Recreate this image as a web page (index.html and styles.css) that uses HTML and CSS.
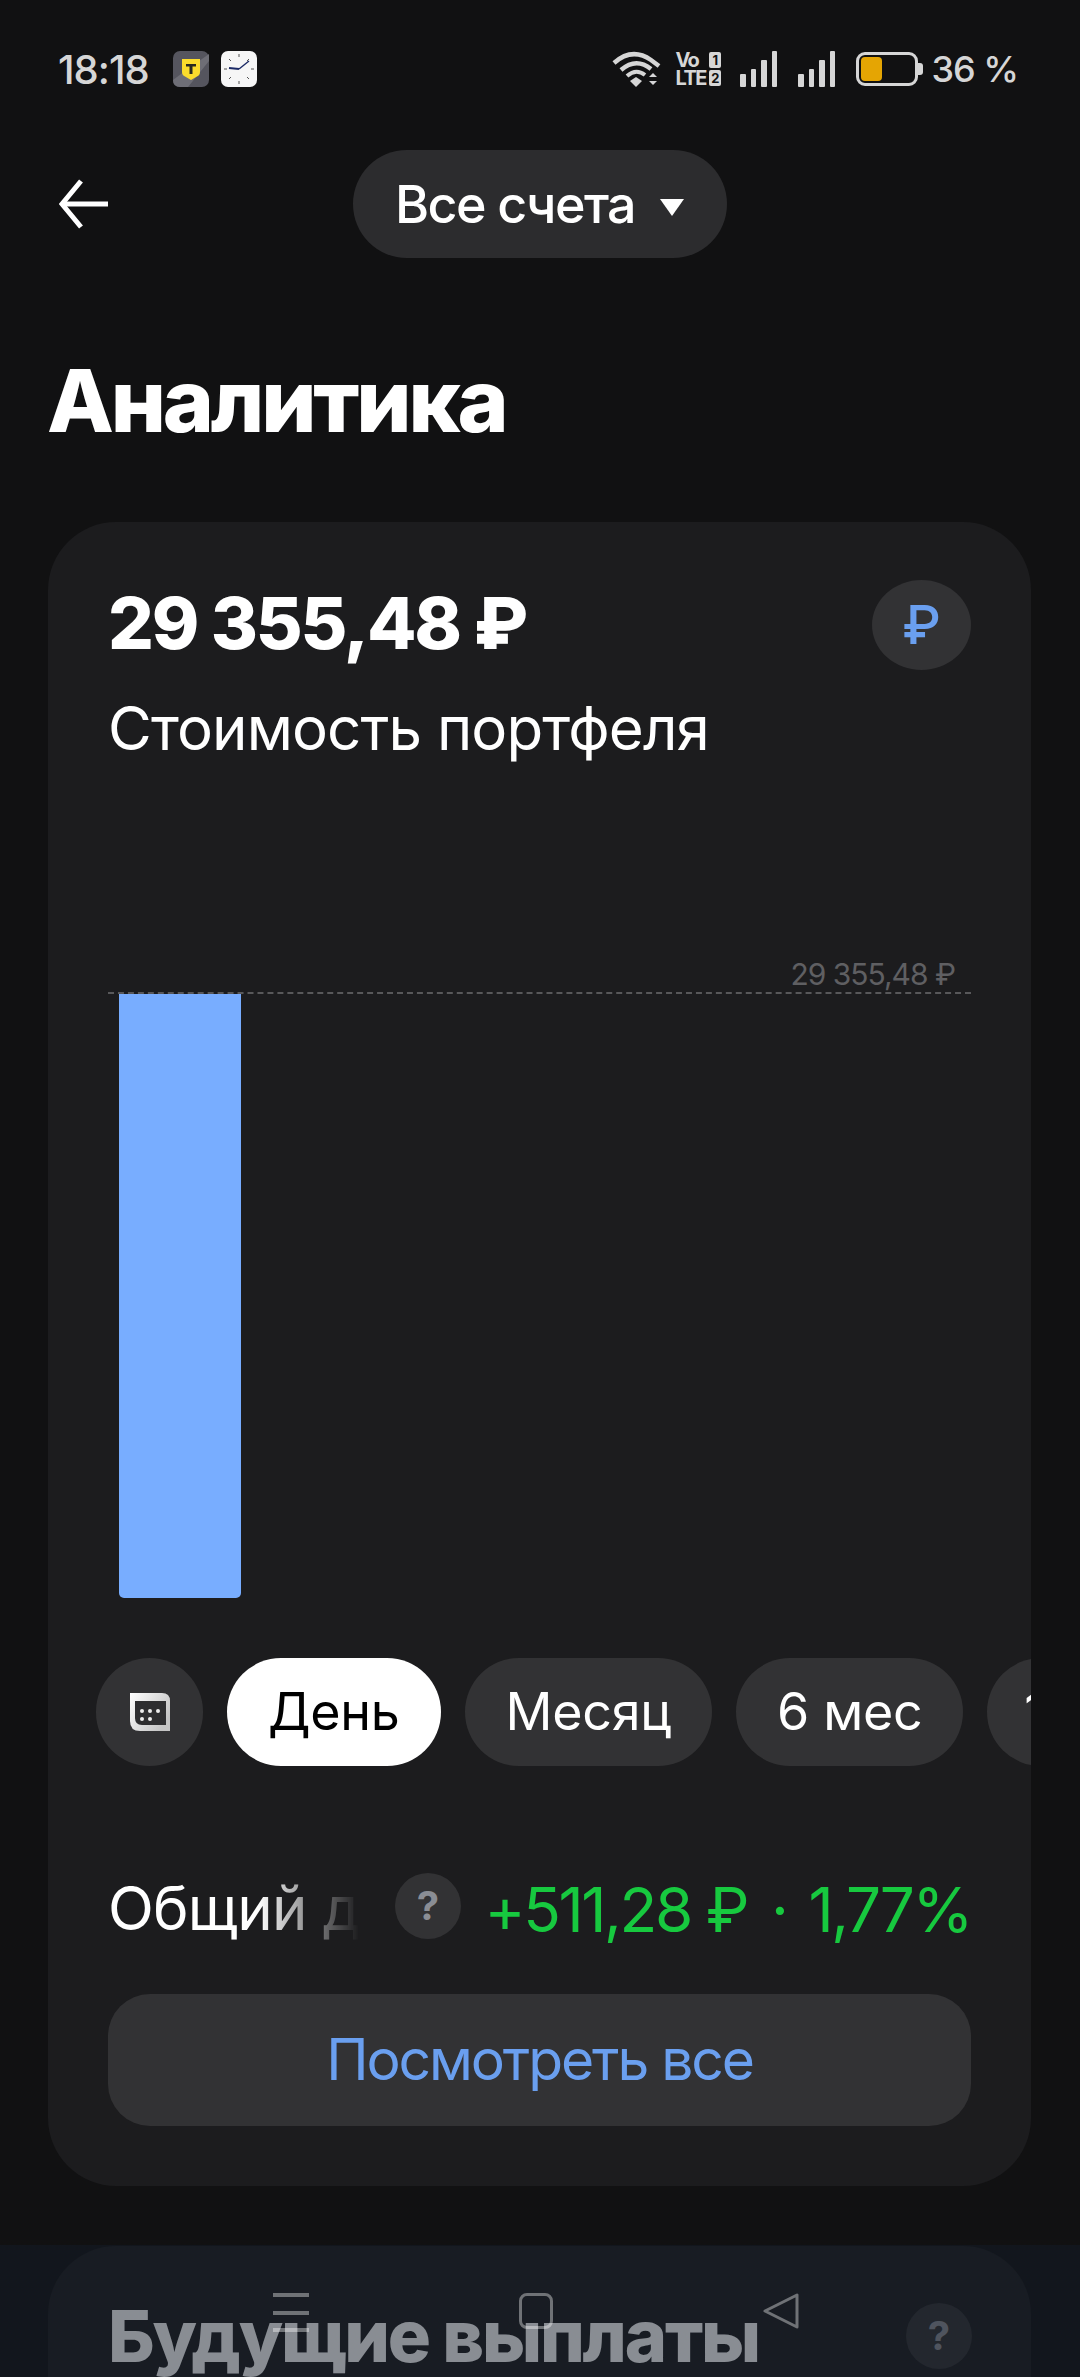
FILE: index.html
```html
<!DOCTYPE html>
<html lang="ru">
<head>
  <meta charset="UTF-8" />
  <meta name="viewport" content="width=device-width, initial-scale=1" />
  <title>Аналитика</title>
  <link rel="stylesheet" href="styles.css">
</head>
<body>

<div class="page">

  <div class="statusbar">
    <div class="status-left">
      <span class="time">18:18</span>
      <svg class="app-icon" viewBox="0 0 36 36">
        <rect width="36" height="36" rx="7" fill="#55555e"/>
        <path d="M0 29 L12 20 L36 3 V10 L15 36 H7 Q0 36 0 29Z" fill="#6e6e76"/>
        <path d="M9 8 H27 V21 Q27 24 24 25.5 L18 29 L12 25.5 Q9 24 9 21Z" fill="#fbdc2c"/>
        <path d="M13 13 H23 V15.5 H19.5 V23 H16.5 V15.5 H13Z" fill="#2a2a20"/>
      </svg>
      <svg class="app-icon" viewBox="0 0 36 36">
        <rect width="36" height="36" rx="7" fill="#f6f6f6"/>
        <g stroke="#555" stroke-width="1">
          <path d="M18 3V6M18 30V33M3 18H6M30 18H33M8 8L10 10M26 26L28 28M28 8L26 10M8 28L10 26"/>
        </g>
        <path d="M18 18L28 10" stroke="#1c2a66" stroke-width="1.5"/>
        <path d="M18 18L8 17" stroke="#1c2a66" stroke-width="2"/>
      </svg>
    </div>
    <div class="status-right">
      <svg class="wifi" width="50" height="36" viewBox="0 0 50 36" fill="none" stroke="#d6d6d6">
        <path d="M2 12 Q20 -4 39 9 L47 15" stroke-width="4.5"/>
        <path d="M9 19 Q24 6 39 18" stroke-width="4.5"/>
        <path d="M15 25 Q24 17 33 24" stroke-width="4"/>
        <path d="M18 30 L24 26 L30 30 L24 36Z" fill="#d6d6d6" stroke="none"/>
        <path d="M37 26 L41 22 L45 26ZM37 30 L45 30 L41 34Z" fill="#d6d6d6" stroke="none"/>
      </svg>
      <div class="volte">
        <div class="volte-row"><span>Vo</span><span class="sim">1</span></div>
        <div class="volte-row"><span>LTE</span><span class="sim">2</span></div>
      </div>
      <div class="signal">
        <i class="s1"></i><i class="s2"></i><i class="s3"></i><i class="s4"></i>
      </div>
      <div class="signal">
        <i class="s1"></i><i class="s2"></i><i class="s3"></i><i class="s4"></i>
      </div>
      <div class="battery"><div class="battery-fill"></div></div>
      <span class="percent">36 %</span>
    </div>
  </div>

  <div class="topnav">
    <svg class="back" width="50" height="50" viewBox="0 0 50 50" fill="none" stroke="#fff" stroke-width="5">
      <path d="M22 2 L3 25 L22 48"/>
      <path d="M3 25 H49"/>
    </svg>
    <div class="account-pill">
      <span>Все счета</span>
      <span class="caret"></span>
    </div>
  </div>

  <h1 class="page-title">Аналитика</h1>

  <section class="card">
    <div class="card-head">
      <div>
        <div class="amount">29 355,48 ₽</div>
        <div class="amount-label">Стоимость портфеля</div>
      </div>
      <div class="currency">₽</div>
    </div>

    <div class="chart">
      <div class="chart-max">29 355,48 ₽</div>
      <div class="chart-area">
        <div class="bar"></div>
      </div>
    </div>

    <div class="chips">
      <div class="chip chip-icon">
        <svg width="40" height="38" viewBox="0 0 40 38">
          <defs>
            <linearGradient id="calTop" x1="0" y1="0" x2="1" y2="0.6">
              <stop offset="0" stop-color="#ffffff"/>
              <stop offset="1" stop-color="#c4c4c4"/>
            </linearGradient>
          </defs>
          <path d="M0 0 H32 Q40 0 40 8 V38 H10 Q0 38 0 28Z" fill="url(#calTop)"/>
          <path d="M5 8 H36 V32 H12 Q5 32 5 25Z" fill="#2e2e30"/>
          <g fill="#ededed">
            <circle cx="12" cy="18" r="2"/><circle cx="20" cy="18" r="2"/><circle cx="28" cy="18" r="2"/>
            <circle cx="12" cy="26" r="2"/><circle cx="20" cy="26" r="2"/>
          </g>
        </svg>
      </div>
      <div class="chip active">День</div>
      <div class="chip">Месяц</div>
      <div class="chip">6 мес</div>
      <div class="chip chip-last">1 год</div>
    </div>

    <div class="total-row">
      <span class="total-label">Общий доход</span>
      <span class="hint">?</span>
      <span class="total-value">+511,28 ₽<span class="dot">·</span>1,77%</span>
    </div>

    <div class="show-all">Посмотреть все</div>
  </section>

  <section class="card card-next">
    <h2>Будущие выплаты</h2>
    <span class="hint hint-next">?</span>
  </section>

  <!-- системная панель поверх контента -->
  <div class="navbar">
    <div class="nav-menu"><i></i><i></i><i></i></div>
    <div class="nav-home"></div>
    <svg width="36" height="36" viewBox="0 0 36 36" fill="none" stroke="#ffffff" stroke-opacity=".38" stroke-width="3" stroke-linejoin="round">
      <path d="M34 2 V34 L2 18Z"/>
    </svg>
  </div>

</div>

</body>
</html>
```

FILE: styles.css
```css
:root {
  --bg: #111112;
  --surface: #1c1c1e;
  --surface2: #323234;
  --blue: #6a9fef;
  --bar: #78adff;
  --green: #17c93f;
  --nav-icon: rgba(255,255,255,.38);
}

* { box-sizing: border-box; margin: 0; padding: 0; }

body {
  font-family: Inter, 'Noto Sans', sans-serif;
  background: var(--bg);
  color: #fff;
}

.page {
  position: relative;
  height: 2377px;
  overflow: hidden;
}

/* Status bar */
.statusbar {
  display: flex;
  align-items: center;
  justify-content: space-between;
  height: 36px;
  margin-top: 51px;
  padding: 0 62px 0 58px;
  color: #d6d6d6;
}

.status-left {
  display: flex;
  align-items: center;
}

.time {
  width: 115px;
  font-size: 40px;
  font-weight: 500;
  letter-spacing: -1px;
}

.app-icon {
  width: 36px;
  height: 36px;
  margin-right: 12px;
}

.status-right {
  display: flex;
  align-items: center;
}

.wifi { margin-right: 13px; }

.volte {
  width: 46px;
  margin-right: 19px;
  font-size: 20px;
  font-weight: 700;
  line-height: 18px;
}

.volte-row {
  display: flex;
  justify-content: space-between;
  align-items: center;
}

.volte-row span:first-child { letter-spacing: -1.5px; }

.sim {
  background: #d6d6d6;
  color: #111;
  border-radius: 2px;
  font-size: 13px;
  line-height: 16px;
  width: 12px;
  text-align: center;
}

.signal {
  display: flex;
  align-items: flex-end;
  gap: 5px;
  height: 36px;
  margin-right: 21px;
}

.signal i {
  display: block;
  width: 5.5px;
  background: #d6d6d6;
  border-radius: 1px;
}

.s1 { height: 13px; }
.s2 { height: 18px; }
.s3 { height: 27px; }
.s4 { height: 36px; }

.battery {
  position: relative;
  width: 62px;
  height: 34px;
  border: 3px solid #d6d6d6;
  border-radius: 9px;
  padding: 2px;
  margin-right: 13px;
}

.battery::after {
  content: "";
  position: absolute;
  right: -8px;
  top: 8px;
  width: 5px;
  height: 12px;
  background: #d6d6d6;
  border-radius: 0 3px 3px 0;
}

.battery-fill {
  width: 21px;
  height: 100%;
  background: #e5a503;
  border-radius: 4px;
}

.percent {
  font-size: 36px;
  font-weight: 500;
  letter-spacing: -1px;
}

/* Top nav */
.topnav {
  position: relative;
  display: flex;
  justify-content: center;
  align-items: center;
  margin-top: 63px;
  height: 108px;
}

.back {
  position: absolute;
  left: 59px;
  top: 29px;
}

.account-pill {
  display: flex;
  align-items: center;
  gap: 25px;
  height: 108px;
  width: 374px;
  padding-left: 42px;
  background: #2c2c2e;
  border-radius: 54px;
  font-size: 52px;
  font-weight: 500;
  letter-spacing: -1.6px;
}

.caret {
  width: 0;
  height: 0;
  margin-top: 6px;
  border-left: 12px solid transparent;
  border-right: 12px solid transparent;
  border-top: 17px solid #fff;
}

.page-title {
  font-size: 87px;
  font-weight: 800;
  letter-spacing: -3.2px;
  line-height: 100px;
  margin: 93px 0 0 47px;
}

/* Card */
.card {
  margin: 71px 49px 0 48px;
  height: 1664px;
  padding: 62px 60px 60px;
  background: var(--surface);
  border-radius: 68px;
  overflow: hidden;
}

.card-head {
  display: flex;
  justify-content: space-between;
  align-items: flex-start;
}

.amount {
  font-size: 72px;
  font-weight: 800;
  line-height: 78px;
  letter-spacing: -2.2px;
}

.amount-label {
  font-size: 60px;
  line-height: 70px;
  margin-top: 31px;
  letter-spacing: -.9px;
}

.currency {
  width: 99px;
  height: 90px;
  margin-top: -4px;
  border-radius: 50%;
  background: var(--surface2);
  color: var(--blue);
  font-size: 54px;
  font-weight: 500;
  line-height: 90px;
  text-align: center;
}

.chart {
  margin-top: 193px;
}

.chart-max {
  font-size: 30px;
  line-height: 36px;
  color: #5f5f62;
  text-align: right;
  padding-right: 16px;
  letter-spacing: -1px;
}

.chart-area {
  height: 606px;
  border-top: 2px dashed #58585a;
  padding-left: 11px;
}

.bar {
  width: 122px;
  height: 604px;
  background: var(--bar);
  border-radius: 0 0 5px 5px;
}

.chips {
  display: flex;
  gap: 24px;
  margin: 60px -60px 0 -12px;
  overflow: hidden;
}

.chip {
  flex: none;
  height: 108px;
  padding: 0 41px;
  background: var(--surface2);
  border-radius: 54px;
  font-size: 52px;
  line-height: 108px;
  letter-spacing: -.3px;
}

.chip-icon {
  display: flex;
  align-items: center;
  justify-content: center;
  width: 107px;
  padding: 0;
}

.chip.active {
  padding: 0 41px;
  background: #fff;
  color: #000;
}

.chip-last { padding-left: 37px; }

.total-row {
  position: relative;
  display: flex;
  align-items: center;
  margin-top: 107px;
  height: 66px;
}

.total-label {
  width: 251px;
  padding-top: 3px;
  font-size: 60px;
  white-space: nowrap;
  overflow: hidden;
  letter-spacing: -.8px;
  -webkit-mask-image: linear-gradient(to right, #000 60%, transparent 100%);
  mask-image: linear-gradient(to right, #000 60%, transparent 100%);
}

.hint {
  flex: none;
  width: 66px;
  height: 66px;
  margin-left: 36px;
  border-radius: 50%;
  background: var(--surface2);
  color: #8a8d94;
  font-size: 40px;
  font-weight: 700;
  line-height: 66px;
  text-align: center;
}

.total-value {
  margin-left: auto;
  padding-top: 6px;
  font-size: 62px;
  color: var(--green);
  white-space: nowrap;
  letter-spacing: -2.4px;
}

.dot {
  margin: 0 22px 0 24px;
}

.show-all {
  height: 132px;
  margin-top: 55px;
  background: var(--surface2);
  border-radius: 42px;
  color: var(--blue);
  font-size: 57px;
  line-height: 132px;
  text-align: center;
  letter-spacing: -2.1px;
}

/* Next card under the navbar */
.card-next {
  position: relative;
  margin-top: 60px;
  padding-top: 50px;
  height: 300px;
}

.card-next h2 {
  font-size: 72px;
  font-weight: 800;
  line-height: 80px;
  letter-spacing: -2.2px;
}

.hint-next {
  position: absolute;
  right: 59px;
  top: 57px;
  margin: 0;
}

/* System navbar */
.navbar {
  position: absolute;
  left: 0;
  right: 0;
  bottom: 0;
  height: 132px;
  display: flex;
  align-items: flex-start;
  padding: 48px 281px 0 273px;
  justify-content: space-between;
  background: rgba(20, 28, 40, .5);
}

.nav-menu {
  display: flex;
  flex-direction: column;
  gap: 13.5px;
  width: 36px;
}

.nav-menu i {
  display: block;
  height: 4px;
  background: var(--nav-icon);
}

.nav-home {
  width: 34px;
  height: 36px;
  border: 3px solid var(--nav-icon);
  border-radius: 8px;
}
```
